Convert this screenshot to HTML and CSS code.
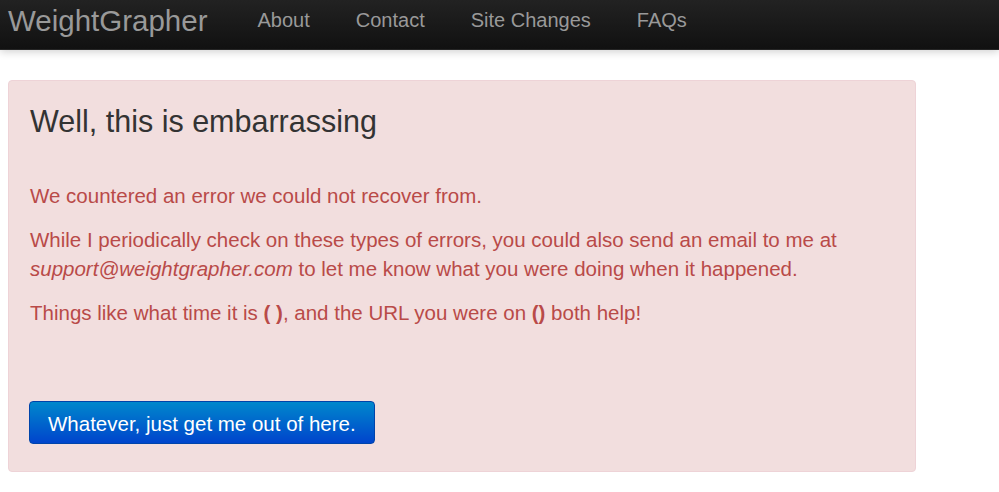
FILE: index.html
```html
<!DOCTYPE html>
<html lang="en">
<head>
    <meta charset="UTF-8">
    <title>WeightGrapher - Error</title>
    <link rel="stylesheet" href="styles.css">
</head>
<body>

    <div class="navbar">
        <a class="brand" href="#">WeightGrapher</a>
        <ul class="nav">
            <li><a href="#">About</a></li>
            <li><a href="#">Contact</a></li>
            <li><a href="#">Site Changes</a></li>
            <li><a href="#">FAQs</a></li>
        </ul>
    </div>

    <div class="container">
        <div class="alert-error">
            <h2>Well, this is embarrassing</h2>
            <p>We countered an error we could not recover from.</p>
            <p>While I periodically check on these types of errors, you could also send an email to me at <em>support@weightgrapher.com</em> to let me know what you were doing when it happened.</p>
            <p>Things like what time it is <strong>( )</strong>, and the URL you were on <strong>()</strong> both help!</p>
            <a class="btn-primary" href="#">Whatever, just get me out of here.</a>
        </div>
    </div>

</body>
</html>
```

FILE: styles.css
```css
body {
    margin: 0;
    font-family: "Liberation Sans", Arial, sans-serif;
    background: #fff;
    color: #333;
}
.navbar {
    height: 50px;
    display: flex;
    align-items: center;
    background: linear-gradient(#222, #111);
    border-bottom: 1px solid #252525;
    box-shadow: 0 2px 8px rgba(0, 0, 0, 0.18);
    box-sizing: border-box;
    padding: 0 0 8px 8px;
}
.navbar a {
    color: #999;
    text-decoration: none;
}
.brand {
    font-size: 29.5px;
    margin-right: 27px;
}
.nav {
    display: flex;
    list-style: none;
    margin: 0;
    padding: 0;
}
.nav a {
    display: block;
    font-size: 20px;
    padding: 0 23px;
}
.container {
    padding: 30px 8px 20px;
}
.alert-error {
    width: 908px;
    box-sizing: border-box;
    background-color: #f2dede;
    border: 1px solid #eed3d7;
    border-radius: 4px;
    padding: 23px 21px 27px;
    color: #b94a48;
}
.alert-error h2 {
    margin: 0 0 42px;
    font-size: 30.5px;
    font-weight: normal;
    line-height: 35px;
    color: #333;
}
.alert-error p {
    margin: 0 0 15px;
    font-size: 20.5px;
    line-height: 29px;
}
.btn-primary {
    display: inline-block;
    margin: 59px 0 0 -1px;
    padding: 0 18px;
    height: 43px;
    line-height: 43px;
    box-sizing: border-box;
    font-size: 20.5px;
    color: #fff;
    text-decoration: none;
    background: linear-gradient(#0088cc, #0044cc);
    border: 1px solid #0044aa;
    border-radius: 4px;
}
```
